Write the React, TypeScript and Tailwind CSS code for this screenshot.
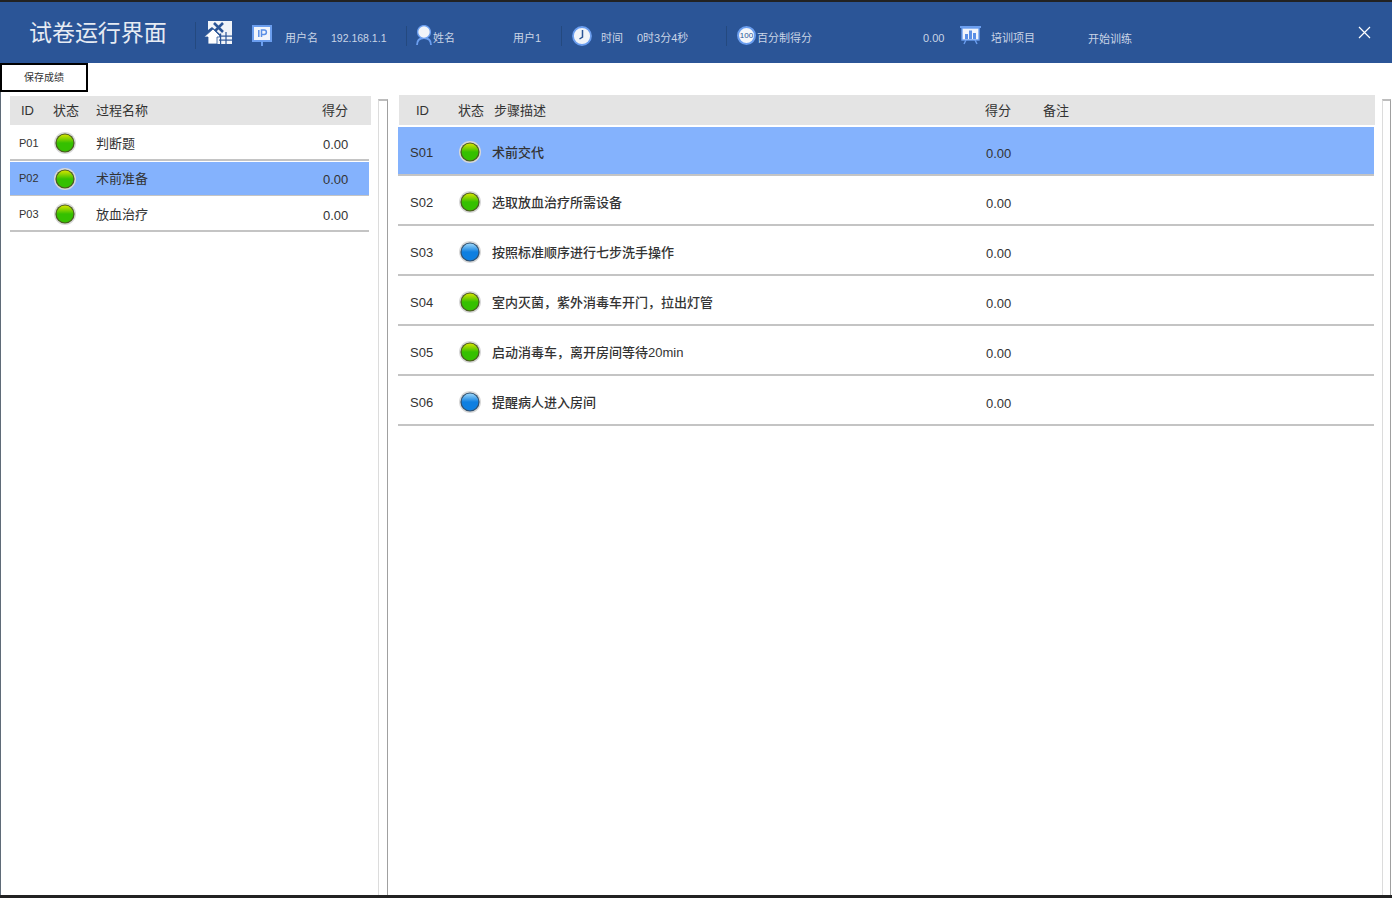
import React from "react";

const FONT = "[font-family:'Liberation_Sans','Noto_Sans_CJK_SC',sans-serif]";

function Led({ color }: { color: "green" | "blue" }) {
  const id = `led-${color}`;
  const main = color === "green" ? "#35c000" : "#0f7fe0";
  const light = color === "green" ? "#d4e400" : "#9ad6fa";
  const edge = color === "green" ? "#4a5a20" : "#30506f";
  return (
    <svg width="24" height="24" viewBox="0 0 24 24" className="shrink-0">
      <defs>
        <linearGradient id={id} x1="0" y1="0" x2="0" y2="1">
          <stop offset="0" stopColor={light} />
          <stop offset="0.5" stopColor={main} />
          <stop offset="1" stopColor={main} />
        </linearGradient>
      </defs>
      <circle cx="12" cy="12" r="11" fill="#d8d8d8" />
      <circle cx="12" cy="12" r="9.6" fill={edge} />
      <circle cx="12" cy="12" r="8.4" fill={`url(#${id})`} />
    </svg>
  );
}

function ExcelIcon() {
  return (
    <svg width="28" height="24" viewBox="0 0 28 24">
      <path d="M4 0H28V23H13V14H17L8 6L4 9Z" fill="#f1f4f9" />
      <path d="M10 2L19 11M19 2L10 11" stroke="#2b5597" strokeWidth="2.6" />
      <path d="M9 8L0 16H4V23H13V16H17Z" fill="#ffffff" stroke="#2b5597" strokeWidth="0.8" />
      <g fill="#2b5597">
        <rect x="16" y="12.5" width="1.2" height="10.5" />
        <rect x="21.4" y="11" width="1.2" height="12" />
        <rect x="15" y="14.5" width="13" height="1.2" />
        <rect x="15" y="18.5" width="13" height="1.2" />
      </g>
    </svg>
  );
}

function IpIcon() {
  return (
    <svg width="20" height="21" viewBox="0 0 20 21">
      <rect x="1" y="1" width="18" height="15" fill="#f2f5fb" stroke="#6b9eef" strokeWidth="2" />
      <rect x="9" y="16" width="2" height="5" fill="#6b9eef" />
      <path d="M5.8 5V12M8.5 12V5H11.2A2 2 0 0 1 11.2 9.4H8.5" transform="translate(1 0)" fill="none" stroke="#5a8fe6" strokeWidth="1.5" />
    </svg>
  );
}

function UserIcon() {
  return (
    <svg width="16" height="21" viewBox="0 0 16 21">
      <path d="M1 20C1 15 4 13 8 13C12 13 15 15 15 20" fill="none" stroke="#6b9eef" strokeWidth="1.8" />
      <circle cx="8" cy="7" r="6.4" fill="#f1f4f9" stroke="#6b9eef" strokeWidth="1.4" />
    </svg>
  );
}

function ClockIcon() {
  return (
    <svg width="20" height="20" viewBox="0 0 20 20">
      <circle cx="10" cy="10" r="9" fill="#f1f4f9" stroke="#6b9eef" strokeWidth="1.8" />
      <path d="M10.5 4V11L7.5 13" fill="none" stroke="#2b5597" strokeWidth="1.5" />
    </svg>
  );
}

function ScoreIcon() {
  return (
    <div className="flex h-[19px] w-[19px] shrink-0 items-center justify-center rounded-full border-2 border-[#6b9eef] bg-[#f4f6fa] text-[8px] leading-none text-[#2b5597]">
      100
    </div>
  );
}

function BoardIcon() {
  return (
    <svg width="21" height="19" viewBox="0 0 21 19">
      <rect x="0" y="0" width="21" height="2" fill="#6b9eef" />
      <rect x="2" y="2" width="17" height="12" fill="#f2f5fb" stroke="#6b9eef" strokeWidth="1.4" />
      <rect x="5" y="8" width="3" height="5" fill="#5a8fe6" />
      <rect x="9" y="4.5" width="3" height="8.5" fill="#5a8fe6" />
      <rect x="13" y="7" width="3" height="6" fill="#5a8fe6" />
      <path d="M6 14L4 18M15 14L17 18" stroke="#6b9eef" strokeWidth="1.4" />
    </svg>
  );
}

const Sep = () => <div className="mt-[6px] h-[20px] w-px shrink-0 bg-[#24497f]" />;

function HeaderText({
  w,
  children,
  className = "",
  size = "text-[11px]",
  mt = "mt-[12px]",
}: {
  w: string;
  children: React.ReactNode;
  className?: string;
  size?: string;
  mt?: string;
}) {
  return <span className={`${w} ${mt} ${size} shrink-0 whitespace-nowrap leading-none text-[#c9d4e6] ${className}`}>{children}</span>;
}

function Scrollbar({ className = "" }: { className?: string }) {
  return (
    <div className={`shrink-0 border-x border-l-[#dcdcdc] border-r-[#a0a0a0] border-t-2 border-t-[#bdbdbd] bg-white ${className}`} />
  );
}

const processes = [
  { id: "P01", name: "判断题", active: false },
  { id: "P02", name: "术前准备", active: true },
  { id: "P03", name: "放血治疗", active: false },
];

const steps: { id: string; name: string; color: "green" | "blue"; active?: boolean }[] = [
  { id: "S01", name: "术前交代", color: "green", active: true },
  { id: "S02", name: "选取放血治疗所需设备", color: "green" },
  { id: "S03", name: "按照标准顺序进行七步洗手操作", color: "blue" },
  { id: "S04", name: "室内灭菌，紫外消毒车开门，拉出灯管", color: "green" },
  { id: "S05", name: "启动消毒车，离开房间等待20min", color: "green" },
  { id: "S06", name: "提醒病人进入房间", color: "blue" },
];

export default function App() {
  return (
    <div className={`flex h-[898px] w-[1392px] flex-col overflow-hidden border-y-2 border-b-[3px] border-y-[#222222] bg-white ${FONT}`}>
      <header className="flex h-[61px] shrink-0 items-center bg-[#2b5597] pl-[29px]">
        <h1 className="mt-[2px] w-[166px] shrink-0 whitespace-nowrap text-[23px] leading-none tracking-[-0.05px] text-[#e6ebf3]">试卷运行界面</h1>
        <div className="mt-[5px] h-[27px] w-px shrink-0 bg-[#24497f]" />
        <div className="ml-[8px] w-[28px] shrink-0"><ExcelIcon /></div>
        <div className="mt-[6px] ml-[20px] w-[20px] shrink-0"><IpIcon /></div>
        <HeaderText w="w-[46px]" className="ml-[13px]">用户名</HeaderText>
        <HeaderText w="w-[75px]" size="text-[10.5px]">192.168.1.1</HeaderText>
        <Sep />
        <div className="mt-[6px] ml-[9px] w-[16px] shrink-0"><UserIcon /></div>
        <HeaderText w="w-[80px]" className="ml-[1px]">姓名</HeaderText>
        <HeaderText w="w-[48px]">用户1</HeaderText>
        <Sep />
        <div className="mt-[6px] ml-[10px] w-[20px] shrink-0"><ClockIcon /></div>
        <HeaderText w="w-[36px]" className="ml-[9px]">时间</HeaderText>
        <HeaderText w="w-[89px]">0时3分4秒</HeaderText>
        <Sep />
        <div className="mt-[6px] ml-[10px] w-[20px] shrink-0"><ScoreIcon /></div>
        <HeaderText w="w-[166px]">百分制得分</HeaderText>
        <HeaderText w="w-[37px]">0.00</HeaderText>
        <div className="mt-[6px] w-[21px] shrink-0"><BoardIcon /></div>
        <HeaderText w="w-[97px]" className="ml-[10px]">培训项目</HeaderText>
        <HeaderText w="w-[270px]" mt="mt-[13px]">开始训练</HeaderText>
        <svg width="13" height="13" viewBox="0 0 13 13" className="shrink-0">
          <path d="M1 1L12 12M12 1L1 12" stroke="#ffffff" strokeWidth="1.2" />
        </svg>
      </header>

      <div className="h-[29px] shrink-0">
        <button className="flex h-[29px] w-[88px] items-center justify-center border-2 border-black bg-white text-[10px] leading-none text-[#333333]">保存成绩</button>
      </div>

      <main className="flex min-h-0 flex-1 border-l border-l-[#5f6b78]">
        <section className="ml-[9px] w-[361px] shrink-0 pt-[4px]">
          <div className="flex h-[29px] items-center bg-[#e4e4e4] text-[13px] leading-none text-[#333333]">
            <span className="ml-[11px] w-[32px]">ID</span>
            <span className="w-[43px]">状态</span>
            <span className="w-[226px]">过程名称</span>
            <span>得分</span>
          </div>
          <div className="w-[359px]">
            {processes.map((p) => (
              <div
                key={p.id}
                className={`flex items-center text-[#333333] ${
                  p.active ? "mt-[1px] h-[34px] border-b border-b-[#c4c4c4] bg-[#84b2fd]" : "h-[36px] border-b-2 border-b-[#c4c4c4] pt-[2px]"
                }`}
              >
                <span className="ml-[9px] w-[34px] text-[11px] leading-none">{p.id}</span>
                <span className="w-[43px]"><Led color="green" /></span>
                <span className="w-[227px] text-[13px] leading-none">{p.name}</span>
                <span className="mt-[2px] text-[13px] leading-none">0.00</span>
              </div>
            ))}
          </div>
        </section>

        <Scrollbar className="mt-[7px] ml-[7px] w-[10px]" />

        <section className="ml-[11px] w-[976px] shrink-0 pt-[3px]">
          <div className="flex h-[30px] items-center bg-[#e4e4e4] text-[13px] leading-none text-[#333333]">
            <span className="ml-[17px] w-[42px]">ID</span>
            <span className="w-[36px]">状态</span>
            <span className="w-[491px]">步骤描述</span>
            <span className="w-[58px]">得分</span>
            <span>备注</span>
          </div>
          <div className="mt-[2px] ml-[-1px] w-[976px]">
            {steps.map((s) => (
              <div
                key={s.id}
                className={`flex items-center border-b-2 border-b-[#c4c4c4] text-[#333333] ${s.active ? "h-[49px] bg-[#84b2fd] pt-[3px]" : "h-[50px] pt-[4px]"}`}
              >
                <span className="ml-[12px] w-[48px] text-[13px] leading-none">{s.id}</span>
                <span className="w-[34px]"><Led color={s.color} /></span>
                <span className="w-[494px] text-[13px] font-medium leading-none">{s.name}</span>
                <span className="mt-[2px] text-[13px] leading-none">0.00</span>
              </div>
            ))}
          </div>
        </section>

        <Scrollbar className="mt-[7px] ml-[7px] w-[9px]" />
      </main>
    </div>
  );
}
